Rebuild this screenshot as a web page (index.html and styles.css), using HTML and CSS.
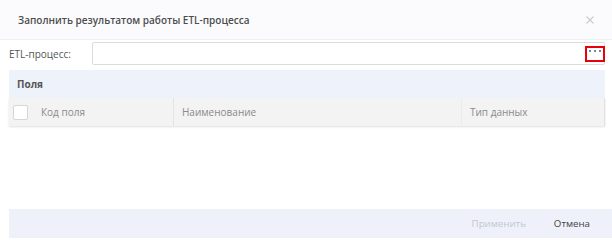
FILE: index.html
```html
<!DOCTYPE html>
<html lang="ru">

<head>
    <meta charset="UTF-8">
    <title>Заполнить результатом работы ETL-процесса</title>
    <link rel="stylesheet" href="styles.css">
</head>

<body>

    <div class="dialog">
        <div class="dialog-header">
            <span class="dialog-title">Заполнить результатом работы ETL-процесса</span>
            <svg class="close-btn" width="8" height="8" viewBox="0 0 8 8">
                <path d="M0.5 0.5 L7.5 7.5 M7.5 0.5 L0.5 7.5" stroke="#cbcbcb" stroke-width="1.1"/>
            </svg>
        </div>

        <div class="field-row">
            <label class="field-label">ETL-процесс:</label>
            <div class="field-input">
                <span class="dots-btn">
                    <svg width="16" height="12" viewBox="0 0 16 12">
                        <rect x="2" y="2" width="2" height="2" fill="#7d8594"/>
                        <rect x="7" y="2" width="2" height="2" fill="#7d8594"/>
                        <rect x="12" y="2" width="2" height="2" fill="#7d8594"/>
                    </svg>
                </span>
            </div>
        </div>

        <div class="fields-band">Поля</div>

        <div class="table-head">
            <div class="col col-code">
                <span class="checkbox"></span>
                Код поля
            </div>
            <div class="col col-name">Наименование</div>
            <div class="col col-type">Тип данных</div>
        </div>

        <div class="table-body"></div>

        <div class="dialog-footer">
            <button class="btn btn-disabled">Применить</button>
            <button class="btn">Отмена</button>
        </div>
    </div>

</body>

</html>
```

FILE: styles.css
```css
body {
    margin: 0;
    font-family: "Open Sans", Arial, sans-serif;
    background-color: #fff;
    color: #555;
}

.dialog {
    width: 612px;
    height: 242px;
    display: flex;
    flex-direction: column;
}

.dialog-header {
    height: 39px;
    display: flex;
    align-items: center;
    justify-content: space-between;
    padding: 0 18px 0 18px;
    background-color: #fbfbfe;
    border-bottom: 1px solid #eef0f5;
}

.dialog-title {
    font-size: 10px;
    font-weight: 600;
    color: #4d4d4d;
}

.close-btn {
    display: block;
}

.field-row {
    display: flex;
    align-items: center;
    margin: 2px 7px 0 9px;
}

.field-label {
    width: 83px;
    font-size: 10px;
    color: #555;
}

.field-input {
    flex: 1;
    height: 21px;
    border: 1px solid #dcdcdc;
    border-radius: 2px;
    display: flex;
    align-items: center;
    justify-content: flex-end;
}

.dots-btn {
    width: 16px;
    height: 12px;
    border: 2px solid #e8000b;
    margin-right: -1px;
}

.dots-btn svg {
    display: block;
}

.fields-band {
    margin: 5px 7px 0 9px;
    height: 28px;
    padding-left: 8px;
    display: flex;
    align-items: center;
    background-color: #eef2fa;
    font-size: 10px;
    font-weight: 700;
    color: #555;
}

.table-head {
    margin: 0 7px 0 9px;
    height: 28px;
    display: flex;
    background-color: #f3f3f3;
    border-right: 1px solid #e2e2e2;
    box-shadow: 0 1px 2px rgba(0, 0, 0, 0.12);
}

.col {
    display: flex;
    align-items: center;
    font-size: 10px;
    color: #8a8a8a;
    box-sizing: border-box;
}

.col-code {
    width: 165px;
    padding-left: 4px;
    border-right: 1px solid #e4e4e4;
}

.col-name {
    width: 288px;
    padding-left: 8px;
    border-right: 1px solid #ebebeb;
}

.col-type {
    flex: 1;
    padding-left: 8px;
}

.checkbox {
    width: 13px;
    height: 13px;
    border: 1px solid #d6d6d6;
    border-radius: 2px;
    background-color: #fff;
    margin-right: 13px;
}

.table-body {
    flex: 1;
}

.dialog-footer {
    margin: 0 0 4px 9px;
    height: 29px;
    display: flex;
    align-items: center;
    justify-content: flex-end;
    gap: 12px;
    padding-right: 14px;
    background-color: #eef1fa;
}

.btn {
    font-family: "Open Sans", Arial, sans-serif;
    font-size: 9.7px;
    color: #444;
    background: none;
    border: none;
    padding: 0 8px;
}

.btn-disabled {
    color: #c3c7cf;
}
```
